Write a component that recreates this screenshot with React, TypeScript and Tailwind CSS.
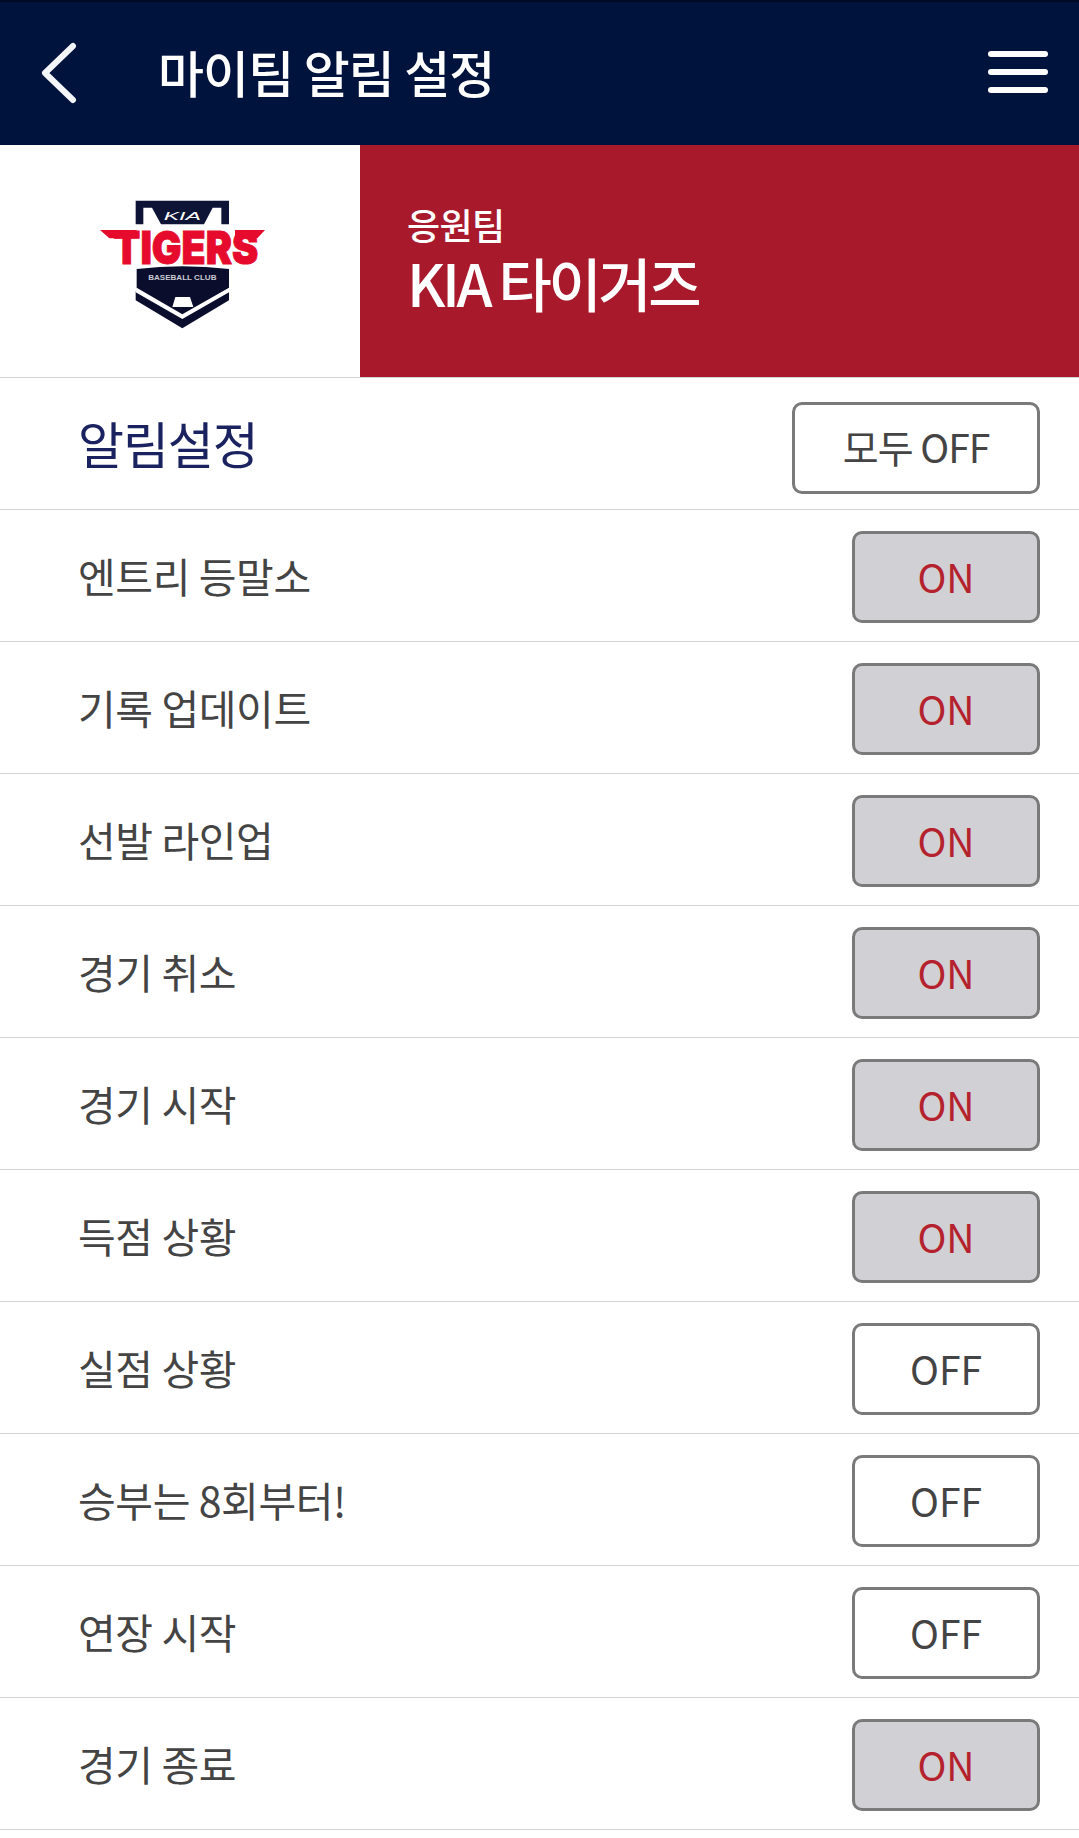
const rows: [string, boolean][] = [
  ["엔트리 등말소", true],
  ["기록 업데이트", true],
  ["선발 라인업", true],
  ["경기 취소", true],
  ["경기 시작", true],
  ["득점 상황", true],
  ["실점 상황", false],
  ["승부는 8회부터!", false],
  ["연장 시작", false],
  ["경기 종료", true],
];

function Logo() {
  return (
    <svg width="200" height="150" viewBox="0 3 600 450" className="block overflow-visible">
      <path d="M167 47H447V118H424V68H398L372 118H243L216 68H190V118H167Z" fill="#0d1436" />
      <text x="307" y="106" textAnchor="middle" textLength="112" lengthAdjust="spacingAndGlyphs" fill="#fff" fontSize="34" fontStyle="italic" fontFamily="'Liberation Sans', sans-serif">KIA</text>
      <path d="M60 135H170L165 160H88Z" fill="#e60b2c" />
      <path d="M465 135H555L532 160H465Z" fill="#e60b2c" />
      <text x="100" y="238" textLength="435" lengthAdjust="spacingAndGlyphs" fill="#e60b2c" stroke="#e60b2c" strokeWidth="3" fontSize="138" fontWeight="900" fontFamily="Inter, 'Liberation Sans', sans-serif">TIGERS</text>
      <path d="M170 252Q307 236 447 252V308L307 388L170 308Z" fill="#0b0d2c" />
      <text x="307" y="285" textAnchor="middle" textLength="205" lengthAdjust="spacingAndGlyphs" fill="#c9cad3" fontSize="22" fontWeight="700" fontFamily="'Liberation Sans', sans-serif">BASEBALL CLUB</text>
      <path d="M277 366L286 336H330L340 366Z" fill="#fff" />
      <path d="M167 318L307 398L447 318V346L307 430L167 346Z" fill="#0b0d2c" />
      <path d="M167 310L307 390L447 310V322L307 402L167 322Z" fill="#fff" />
    </svg>
  );
}

function Toggle({ on }: { on: boolean }) {
  return (
    <div
      className={`mt-[3px] flex h-[92px] w-[188px] items-center justify-center rounded-[10px] border-[3px] border-[#7a7a7a] pb-[2px] text-[39px] ${
        on ? "bg-[#d1d0d5] text-[#b5222d]" : "bg-white text-[#444444]"
      }`}
    >
      {on ? "ON" : "OFF"}
    </div>
  );
}

export default function App() {
  return (
    <div className="min-h-[1838px] w-[1079px] bg-white font-['Noto_Sans_CJK_KR','Noto_Sans',sans-serif]">
      <header className="flex h-[145px] items-center border-t-2 border-[#000a24] bg-[#00133d] pr-[31px] pl-[40px] text-white">
        <svg width="38" height="62" viewBox="0 0 38 62" fill="none" stroke="#f4f5f8" strokeWidth="6" strokeLinecap="round" strokeLinejoin="round" className="mb-[1px]">
          <path d="M33 4L5 31L33 58" />
        </svg>
        <h1 className="mb-[6px] ml-[80px] flex-1 text-[50px] leading-none font-medium tracking-[-0.9px]">마이팀 알림 설정</h1>
        <div className="mb-[3px] flex w-[60px] flex-col gap-[12px]">
          <span className="h-[6px] rounded-full bg-white" />
          <span className="h-[6px] rounded-full bg-white" />
          <span className="h-[6px] rounded-full bg-white" />
        </div>
      </header>
      <section className="flex h-[233px] border-b border-[#d4d4d4]">
        <div className="flex w-[360px] items-center justify-center">
          <Logo />
        </div>
        <div className="flex flex-1 flex-col justify-center bg-[#a8192c] pl-[47px] text-white">
          <div className="text-[36px] leading-[42px] font-medium tracking-[-0.6px]">응원팀</div>
          <div className="text-[58px] leading-[74px] font-medium tracking-[-3.5px]">KIA 타이거즈</div>
        </div>
      </section>
      <div className="flex h-[132px] items-center justify-between border-b border-[#d4d4d4] pr-[39px] pl-[78px]">
        <div className="mb-[2px] text-[50px] tracking-[-1.1px] text-[#1a2260]">알림설정</div>
        <div className="mt-[8px] flex h-[92px] w-[248px] items-center justify-center rounded-[10px] border-[3px] border-[#7a7a7a] pb-[2px] text-[39px] tracking-[-1px] text-[#444444]">
          모두 OFF
        </div>
      </div>
      {rows.map(([label, on]) => (
        <div key={label} className="flex h-[132px] items-center justify-between border-b border-[#d4d4d4] pr-[39px] pl-[78px]">
          <div className="text-[41px] tracking-[-0.4px] text-[#444444]">{label}</div>
          <Toggle on={on} />
        </div>
      ))}
    </div>
  );
}
